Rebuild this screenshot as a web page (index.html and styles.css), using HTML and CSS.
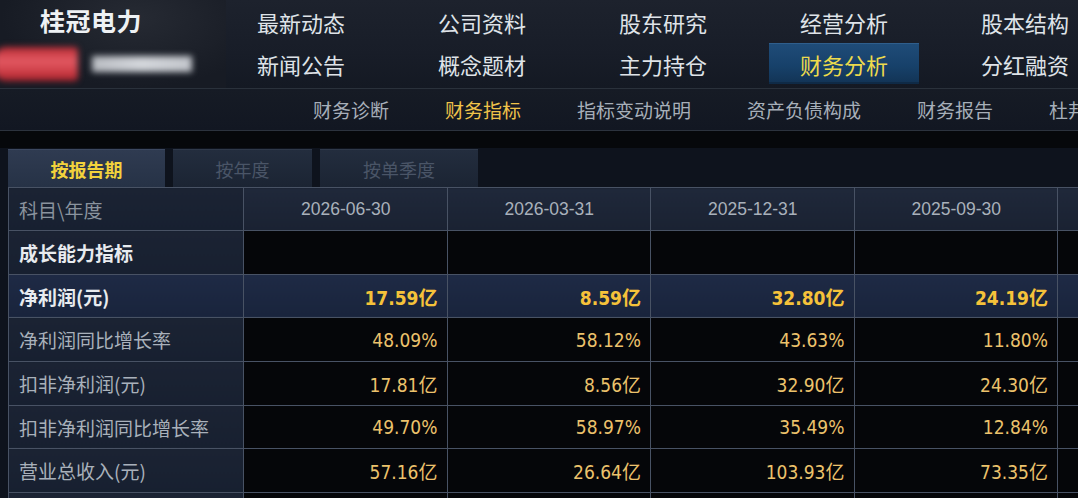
FILE: index.html
```html
<!DOCTYPE html>
<html lang="zh-CN">
<head>
    <meta charset="UTF-8">
    <title>桂冠电力 - 财务指标</title>
    <link rel="stylesheet" href="styles.css">
</head>
<body>

<header class="top">
    <div class="brand">
        <div class="brand-name">桂冠电力</div>
        <div class="brand-code">
            <span class="blur blur-red"></span>
            <span class="blur blur-gray"></span>
        </div>
    </div>
    <nav class="main-nav">
        <a>最新动态</a>
        <a>公司资料</a>
        <a>股东研究</a>
        <a>经营分析</a>
        <a>股本结构</a>
        <a>新闻公告</a>
        <a>概念题材</a>
        <a>主力持仓</a>
        <a class="active">财务分析</a>
        <a>分红融资</a>
    </nav>
</header>

<nav class="sub-nav">
    <a>财务诊断</a>
    <a class="active">财务指标</a>
    <a>指标变动说明</a>
    <a>资产负债构成</a>
    <a>财务报告</a>
    <a>杜邦分析</a>
</nav>

<div class="strip"></div>

<section class="report">
    <div class="tabs">
        <div class="tab active">按报告期</div>
        <div class="tab tab-year">按年度</div>
        <div class="tab tab-quarter">按单季度</div>
    </div>

    <table class="data">
        <colgroup>
            <col class="c-label">
            <col class="c-val">
            <col class="c-val">
            <col class="c-val">
            <col class="c-val">
            <col class="c-more">
        </colgroup>
        <thead>
            <tr>
                <th class="label dim">科目\年度</th>
                <th>2026-06-30</th>
                <th>2026-03-31</th>
                <th>2025-12-31</th>
                <th>2025-09-30</th>
                <th></th>
            </tr>
        </thead>
        <tbody>
            <tr class="section">
                <td class="label strong">成长能力指标</td>
                <td></td><td></td><td></td><td></td><td></td>
            </tr>
            <tr class="hl">
                <td class="label strong">净利润(元)</td>
                <td>17.59亿</td>
                <td>8.59亿</td>
                <td>32.80亿</td>
                <td>24.19亿</td>
                <td></td>
            </tr>
            <tr>
                <td class="label">净利润同比增长率</td>
                <td>48.09%</td>
                <td>58.12%</td>
                <td>43.63%</td>
                <td>11.80%</td>
                <td></td>
            </tr>
            <tr>
                <td class="label">扣非净利润(元)</td>
                <td>17.81亿</td>
                <td>8.56亿</td>
                <td>32.90亿</td>
                <td>24.30亿</td>
                <td></td>
            </tr>
            <tr>
                <td class="label">扣非净利润同比增长率</td>
                <td>49.70%</td>
                <td>58.97%</td>
                <td>35.49%</td>
                <td>12.84%</td>
                <td></td>
            </tr>
            <tr>
                <td class="label">营业总收入(元)</td>
                <td>57.16亿</td>
                <td>26.64亿</td>
                <td>103.93亿</td>
                <td>73.35亿</td>
                <td></td>
            </tr>
            <tr>
                <td class="label"></td>
                <td></td><td></td><td></td><td></td><td></td>
            </tr>
        </tbody>
    </table>
</section>

</body>
</html>
```

FILE: styles.css
```css
body {
    margin: 0;
    width: 1078px;
    height: 498px;
    overflow: hidden;
    background-color: #0b0e14;
    font-family: "Noto Sans CJK SC", "Noto Sans", sans-serif;
    color: #d8dde3;
}
a {
    cursor: pointer;
}

/* top bar */
.top {
    display: flex;
    height: 88px;
    background: linear-gradient(180deg, #1d222d 0%, #181d28 60%, #141923 100%);
    overflow: hidden;
}
.brand {
    width: 226px;
    flex-shrink: 0;
    background: radial-gradient(ellipse at 60% 20%, #262a33 0%, #171b24 70%);
}
.brand-name {
    padding: 3px 0 0 40px;
    font-size: 25px;
    font-weight: bold;
    line-height: 34px;
    color: #eef1f4;
    letter-spacing: 0.5px;
}
.brand-code {
    display: flex;
    align-items: center;
    gap: 14px;
    margin-top: 8px;
    height: 38px;
}
.blur {
    display: block;
    filter: blur(3px);
}
.blur-red {
    width: 84px;
    height: 34px;
    margin-left: -6px;
    border-radius: 12px 4px 4px 12px;
    background: linear-gradient(180deg, #b82a33 0%, #e35a63 40%, #d0414a 70%, #a8222b 100%);
}
.blur-gray {
    width: 100px;
    height: 16px;
    background: linear-gradient(90deg, #b9bcc2, #d3d6db 50%, #c2c5cb);
}

.main-nav {
    display: grid;
    grid-template-columns: repeat(5, 150px);
    grid-template-rows: 43px 41px;
    column-gap: 31px;
}
.main-nav a {
    display: flex;
    align-items: center;
    justify-content: center;
    font-size: 22px;
    color: #dfe3e8;
}
.main-nav a.active {
    color: #eedb4c;
    background: linear-gradient(180deg, #1f4c78 0%, #17416a 55%, #123354 100%);
    border-top: 1px solid #2f5e8c;
    box-shadow: inset 0 -2px 0 #0f2a46;
}

/* second level */
.sub-nav {
    display: flex;
    align-items: center;
    gap: 56px;
    height: 41px;
    padding-left: 313px;
    border-top: 1px solid #2a313b;
    border-bottom: 1px solid #2c333e;
    background: linear-gradient(180deg, #161b25, #121722);
    white-space: nowrap;
    overflow: hidden;
}
.sub-nav a {
    font-size: 19px;
    color: #a7afb9;
}
.sub-nav a.active {
    color: #f0c34a;
}

.strip {
    height: 17px;
    background-color: #06080b;
}

/* report */
.report {
    background-color: #0e131d;
    padding-left: 8px;
}
.tabs {
    display: flex;
    gap: 8px;
    height: 38px;
    padding-top: 1px;
}
.tab {
    display: flex;
    align-items: center;
    justify-content: center;
    font-size: 18px;
    color: #4a5567;
    background: linear-gradient(180deg, #232d3e, #1b2433);
    border-top: 1px solid #2f394a;
}
.tab.active {
    width: 157px;
    font-weight: bold;
    color: #f2d23c;
    background: linear-gradient(180deg, #2f3b51, #263246);
    border-top-color: #3c4860;
}
.tab-year {
    width: 139px;
}
.tab-quarter {
    width: 158px;
}

.data {
    border-collapse: collapse;
    table-layout: fixed;
    width: 1150px;
}
.c-label { width: 235px; }
.c-val { width: 203.5px; }
.c-more { width: 100px; }

.data th,
.data td {
    height: 43.7px;
    padding: 0 9px 0 10px;
    border: 1px solid #485264;
    box-sizing: border-box;
    white-space: nowrap;
}
.data th {
    height: 43px;
    font-family: "Liberation Sans", "Noto Sans CJK SC", sans-serif;
    font-size: 17.5px;
    font-weight: normal;
    color: #a9b1bb;
    text-align: center;
    background: linear-gradient(180deg, #1f283a, #1a2232);
}
.data td {
    font-family: "DejaVu Sans Condensed", "DejaVu Sans", "Noto Sans CJK SC", sans-serif;
    font-stretch: condensed;
    font-size: 19px;
    color: #ecc26c;
    text-align: right;
    background-color: #050609;
}
.data .label {
    font-family: "Noto Sans CJK SC", sans-serif;
    font-stretch: normal;
    font-size: 19px;
    text-align: left;
    color: #a9b1bb;
    background: linear-gradient(180deg, #1b2333, #172030);
}
.data .label.dim {
    color: #8a939e;
}
.data .label.strong {
    font-weight: bold;
    color: #e8ebef;
}
.data tr.hl td {
    font-weight: bold;
    color: #f5c23a;
    background: linear-gradient(180deg, #1e2a45, #19243c);
}
```
